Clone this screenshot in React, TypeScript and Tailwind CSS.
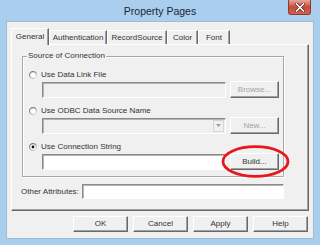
import React from "react";

function Radio({ checked, id }: { checked?: boolean; id: string }) {
  return (
    <svg width="8" height="8" viewBox="0 0 8 8" className="shrink-0">
      <defs>
        <linearGradient id={id} x1="0" y1="0" x2="1" y2="1">
          <stop offset="0" stopColor="#6a6a6a" />
          <stop offset="0.55" stopColor="#9a9a9a" />
          <stop offset="1" stopColor="#f4f4f4" />
        </linearGradient>
      </defs>
      <circle cx="4" cy="4" r="3.4" fill="#ffffff" stroke={`url(#${id})`} strokeWidth="1.1" />
      {checked && <circle cx="4" cy="4" r="1.4" fill="#111111" />}
    </svg>
  );
}

function Btn({ label, disabled, w = "w-[49px]", h = "h-[17px]" }: { label: string; disabled?: boolean; w?: string; h?: string }) {
  return (
    <div
      className={`${w} ${h} shrink-0 flex items-center justify-center bg-[#f0f0f0] border border-t-white border-l-white border-r-[#696969] border-b-[#696969] shadow-[inset_-1px_-1px_0_#a0a0a0] ${
        disabled ? "text-[#a3a3a3]" : "text-[#333333]"
      }`}
    >
      {label}
    </div>
  );
}

function Tab({ label, w, selected }: { label: string; w: string; selected?: boolean }) {
  return (
    <div
      className={`${w} ${
        selected ? "h-[17px] -mb-[1px] relative z-10" : "h-[14px]"
      } shrink-0 flex items-center justify-center bg-[#f0f0f0] border-t border-l border-t-white border-l-white border-r border-r-[#696969] shadow-[inset_-1px_0_0_#a0a0a0] text-[#333333]`}
    >
      {label}
    </div>
  );
}

const sunken =
  "border border-t-[#8a8a8a] border-l-[#8a8a8a] border-r-white border-b-white shadow-[inset_1px_1px_0_#b4b4b4]";

export default function App() {
  return (
    <div className="relative w-[320px] h-[245px] bg-[#aacfee] flex flex-col overflow-hidden font-['Liberation_Sans',Arial,sans-serif] text-[8px] leading-[10px] text-[#333333]">
      {/* Title bar */}
      <div className="h-[21px] flex shrink-0">
        <div className="w-[32px]" />
        <div className="flex-1 text-center text-[10.5px] leading-[21px] pt-[1px] text-[#1c2633]">Property Pages</div>
        <div className="w-[32px] flex items-start">
          <div className="w-[23px] h-[15px] rounded-b-[3px] border border-t-0 border-[#8e3a30] bg-gradient-to-b from-[#e3a69d] via-[#c9483a] to-[#d4604f] flex items-center justify-center">
            <svg width="10" height="9" viewBox="0 0 10 9">
              <path d="M1.5 1 L8.5 8 M8.5 1 L1.5 8" stroke="#5a1d17" strokeWidth="3" strokeLinecap="square" />
              <path d="M1.5 1 L8.5 8 M8.5 1 L1.5 8" stroke="#ffffff" strokeWidth="1.6" strokeLinecap="square" />
            </svg>
          </div>
        </div>
      </div>

      {/* Client area */}
      <div className="mx-[6px] h-[218px] shrink-0 bg-[#f0f0f0] border border-[#9dbcd9] flex flex-col pt-[6px] px-[4px]">
        {/* Tabs */}
        <div className="h-[16px] flex items-end">
          <Tab label="General" w="w-[38px]" selected />
          <Tab label="Authentication" w="w-[58px]" />
          <Tab label="RecordSource" w="w-[60px]" />
          <Tab label="Color" w="w-[31px]" />
          <Tab label="Font" w="w-[32px]" />
        </div>

        {/* Panel */}
        <div className="w-[298px] h-[167px] border border-t-white border-l-white border-r-[#696969] border-b-[#696969] shadow-[inset_-1px_-1px_0_#a0a0a0] pt-[6px] pl-[10px] flex flex-col">
          <fieldset className="w-[262px] h-[126px] border border-[#a8a8a8] shadow-[inset_1px_1px_0_#ffffff,1px_1px_0_#ffffff]">
            <legend className="ml-[4px] px-[1px] leading-[10px]">Source of Connection</legend>
            <div className="flex flex-col pl-[6px] pt-[9px]">
              <div className="h-[10px] flex items-center gap-[4px]">
                <Radio id="r1" />
                <span>Use Data Link File</span>
              </div>
              <div className="mt-[1px] h-[17px] flex items-center gap-[4px] pl-[13px]">
                <div className={`w-[184px] h-[16px] bg-[#f0f0f0] ${sunken}`} />
                <Btn label="Browse..." disabled />
              </div>

              <div className="mt-[8px] h-[10px] flex items-center gap-[4px]">
                <Radio id="r2" />
                <span>Use ODBC Data Source Name</span>
              </div>
              <div className="mt-[1px] h-[17px] flex items-center gap-[4px] pl-[13px]">
                <div className={`w-[184px] h-[16px] bg-[#f0f0f0] ${sunken} flex justify-end items-stretch p-[1px]`}>
                  <div className="w-[11px] bg-[#f0f0f0] border border-[#d6d6d6] flex items-center justify-center">
                    <svg width="5" height="3" viewBox="0 0 5 3">
                      <path d="M0 0 H5 L2.5 3 Z" fill="#a0a0a0" />
                    </svg>
                  </div>
                </div>
                <Btn label="New..." disabled />
              </div>

              <div className="mt-[8px] h-[10px] flex items-center gap-[4px]">
                <Radio id="r3" checked />
                <span>Use Connection String</span>
              </div>
              <div className="mt-[1px] h-[17px] flex items-center gap-[4px] pl-[13px]">
                <div className={`w-[184px] h-[16px] bg-white ${sunken}`} />
                <Btn label="Build..." />
              </div>
            </div>
          </fieldset>

          <div className="mt-[7px] h-[15px] flex items-center gap-[3px] -ml-[1px]">
            <span>Other Attributes:</span>
            <div className={`w-[202px] h-[15px] bg-white ${sunken}`} />
          </div>
        </div>

        {/* Bottom buttons */}
        <div className="mt-[5px] flex justify-end gap-[5px] pr-[1px]">
          <Btn label="OK" w="w-[55px]" h="h-[16px]" />
          <Btn label="Cancel" w="w-[55px]" h="h-[16px]" />
          <Btn label="Apply" w="w-[55px]" h="h-[16px]" />
          <Btn label="Help" w="w-[55px]" h="h-[16px]" />
        </div>
      </div>

      {/* Red annotation ellipse */}
      <svg className="absolute left-[220px] top-[144px]" width="72" height="36" viewBox="0 0 72 36">
        <ellipse cx="35.5" cy="17.5" rx="32.5" ry="14.8" fill="none" stroke="#e8161d" strokeWidth="2.8" />
      </svg>
    </div>
  );
}
